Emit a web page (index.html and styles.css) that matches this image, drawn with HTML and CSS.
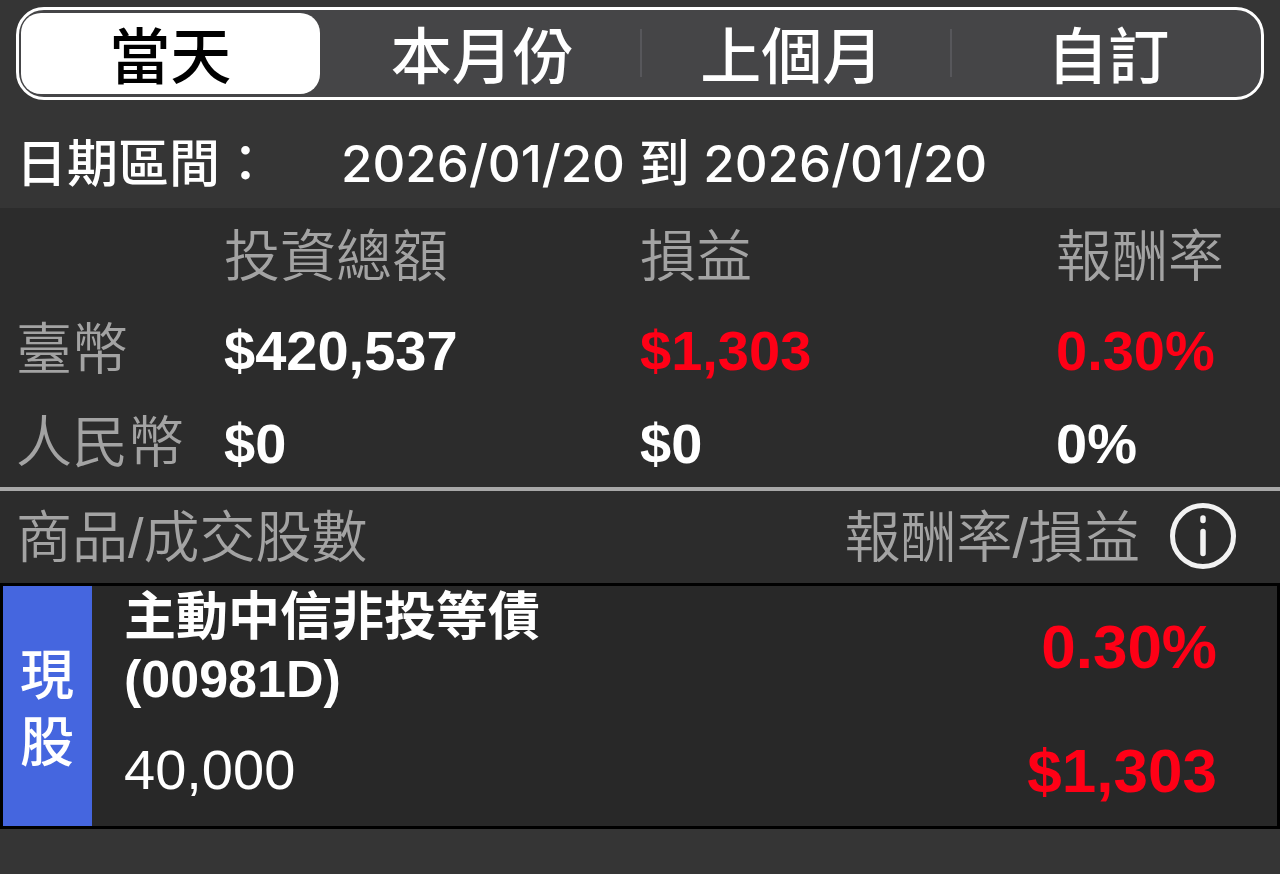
FILE: index.html
```html
<!DOCTYPE html>
<html lang="zh-Hant">
<head>
  <meta charset="UTF-8">
  <meta name="viewport" content="width=device-width, initial-scale=1.0">
  <title>已實現損益</title>
  <link rel="stylesheet" href="styles.css">
</head>
<body>
  <header class="filter">
    <div class="tabs">
      <button type="button" class="tab tab--active">當天</button>
      <button type="button" class="tab">本月份</button>
      <button type="button" class="tab tab--line">上個月</button>
      <button type="button" class="tab tab--line">自訂</button>
    </div>
    <div class="date-range">
      <span class="date-label">日期區間：</span>
      <span>2026/01/20 到 2026/01/20</span>
    </div>
  </header>

  <table class="summary">
    <thead>
      <tr>
        <td class="col-name"></td>
        <th scope="col">投資總額</th>
        <th scope="col">損益</th>
        <th scope="col" class="col-rate">報酬率</th>
      </tr>
    </thead>
    <tbody>
      <tr>
        <th scope="row">臺幣</th>
        <td>$420,537</td>
        <td class="up">$1,303</td>
        <td class="up">0.30%</td>
      </tr>
      <tr>
        <th scope="row">人民幣</th>
        <td>$0</td>
        <td>$0</td>
        <td>0%</td>
      </tr>
    </tbody>
  </table>

  <main>
    <div class="list-header">
      <span>商品/成交股數</span>
      <span class="list-rate">報酬率/損益</span>
      <button type="button" class="info-btn" aria-label="說明">
        <svg viewBox="0 0 66 66" width="66" height="66" fill="none" stroke="#f2f2f2" stroke-linecap="round">
          <circle cx="33" cy="33" r="30.500" stroke-width="5"/>
          <path d="M33 15v2.500M33 28.500v22" stroke-width="5.500"/>
        </svg>
      </button>
    </div>

    <article class="item">
      <div class="item-type"><span>現股</span></div>
      <div class="item-info">
        <h2 class="item-name">主動中信非投等債<br>(00981D)</h2>
        <p class="item-qty">40,000</p>
      </div>
      <div class="item-result up">
        <span>0.30%</span>
        <span>$1,303</span>
      </div>
    </article>
  </main>
</body>
</html>
```
FILE: styles.css
```css
* {
  box-sizing: border-box;
}

body {
  margin: 0;
  background: #353535;
  color: #fff;
  font-family: "Liberation Sans", "Noto Sans CJK TC", sans-serif;
  font-size: 56px;
}

button {
  padding: 0;
  border: none;
  background: none;
  color: inherit;
  font: inherit;
  cursor: pointer;
}

.filter {
  padding: 7px 16px 0;
}

.tabs {
  display: grid;
  grid-template-columns: repeat(4, 1fr);
  height: 93px;
  padding: 3px 2px;
  border: 3px solid #fff;
  border-radius: 28px;
  background: #454547;
}

.tab {
  position: relative;
  padding: 0 6px 2px 0;
  font-family: "Noto Sans CJK TC", sans-serif;
  font-size: 61px;
  font-weight: 500;
  line-height: 78px;
}

.tab:last-child {
  padding: 0 0 2px 8px;
}

.tab--active {
  margin-right: 11px;
  padding: 0 0 2px;
  border-radius: 20px;
  background: #fff;
  color: #000;
}

/* separator between two unselected tabs */
.tab--line::before {
  content: "";
  position: absolute;
  left: 0;
  top: 16px;
  width: 2px;
  height: 48px;
  background: #57575b;
}

.date-range {
  display: flex;
  align-items: center;
  height: 108px;
  padding-top: 12px;
  font-family: Inter, "Noto Sans CJK TC", sans-serif;
  font-size: 51px;
  font-weight: 500;
  white-space: nowrap;
}

.date-label {
  width: 325px;
}

.summary {
  width: 100%;
  table-layout: fixed;
  border-collapse: collapse;
  border-bottom: 4px solid #a8a8a8;
  background: #2c2c2c;
  text-align: left;
  white-space: nowrap;
}

.summary th {
  padding: 0 0 6px;
  color: #a3a3a3;
  font-family: "Noto Sans CJK TC", sans-serif;
  font-weight: 350;
  line-height: 87px;
}

.summary td {
  padding: 5px 0 0;
  font-weight: bold;
  line-height: 85px;
}

.summary tbody th {
  padding-left: 16px;
}

.col-name {
  width: 17.5%;
}

.col-rate {
  width: 17.5%;
}

.summary .up,
.up {
  color: #ff0016;
}

.list-header {
  display: flex;
  align-items: center;
  height: 92px;
  padding: 0 44px 2px 16px;
  background: #2c2c2c;
  color: #a3a3a3;
  font-weight: 350;
  line-height: 72px;
}

.list-header span {
  padding-top: 4px;
}

.list-rate {
  margin-left: auto;
}

.info-btn {
  height: 66px;
  margin-left: 30px;
}

.info-btn svg {
  display: block;
}

.item {
  display: flex;
  border: 3px solid #000;
  background: #282828;
}

.item-type {
  display: flex;
  align-items: center;
  width: 89px;
  padding: 0 17px 2px;
  background: #4566df;
  font-family: "Noto Sans CJK TC", sans-serif;
  font-size: 54px;
  font-weight: 500;
  line-height: 67px;
}

.item-info {
  flex: 1;
  padding: 0 0 24px 32px;
}

.item-name {
  margin: 0;
  font-size: 52px;
  font-weight: bold;
  line-height: 62px;
}

.item-qty {
  margin: 28px 0 0;
  line-height: 64px;
}

.item-result {
  display: flex;
  flex-direction: column;
  gap: 60px;
  padding: 29px 60px 0 0;
  font-size: 62px;
  font-weight: bold;
  line-height: 64px;
  text-align: right;
}
```
